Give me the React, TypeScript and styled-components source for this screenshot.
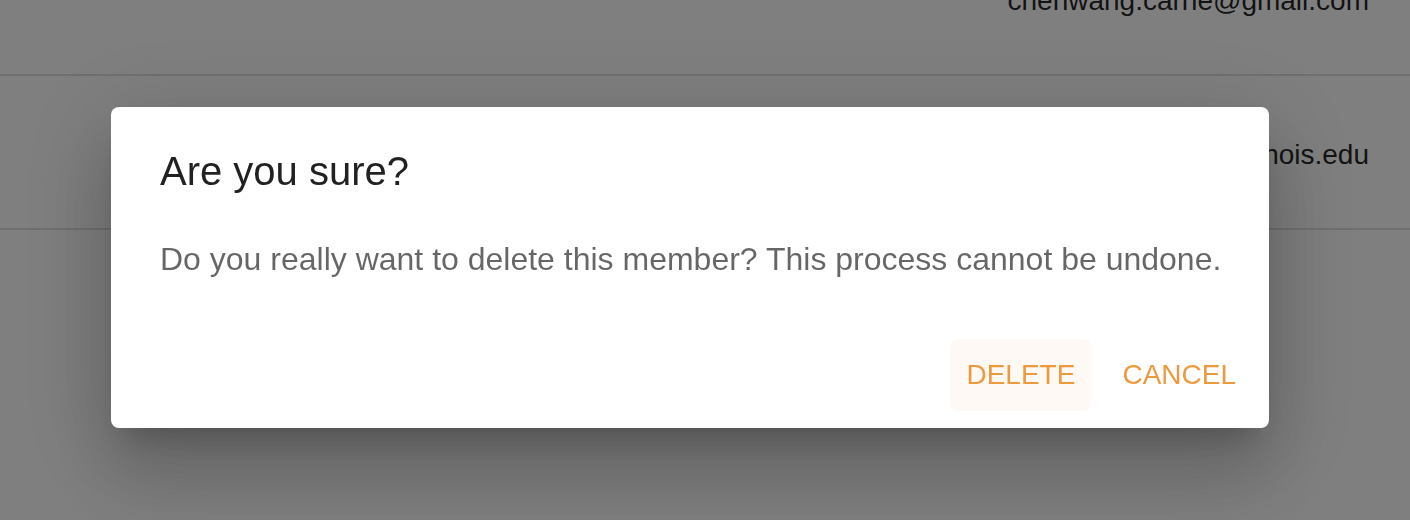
import styled, { createGlobalStyle } from "styled-components";

const GlobalStyle = createGlobalStyle`
  html, body {
    margin: 0;
    padding: 0;
    background: #ffffff;
    font-family: "Liberation Sans", Arial, Helvetica, sans-serif;
    overflow: hidden;
  }
`;

const members = [
  { email: "chenwang.carrie@gmail.com" },
  { email: "chenwang2@illinois.edu" },
];

const App = () => {
  return (
    <>
      <GlobalStyle />
      <Page>
        {/* table scrolled a bit, first row is partly hidden */}
        <MemberTable>
          {members.map((m) => (
            <MemberRow key={m.email}>
              <EmailCell>{m.email}</EmailCell>
            </MemberRow>
          ))}
        </MemberTable>
      </Page>
      <Backdrop>
        <Dialog role="dialog">
          <DialogTitle>Are you sure?</DialogTitle>
          <DialogText>Do you really want to delete this member? This process cannot be undone.</DialogText>
          <DialogActions>
            <ActionButton $hover>DELETE</ActionButton>
            <ActionButton>CANCEL</ActionButton>
          </DialogActions>
        </Dialog>
      </Backdrop>
    </>
  );
};

export default App;

const Page = styled.div`
  width: 1410px;
  height: 520px;
  overflow: hidden;
  background: #ffffff;
`;

const MemberTable = styled.div`
  display: flex;
  flex-direction: column;
  margin-top: -78px;
`;

const MemberRow = styled.div`
  display: flex;
  align-items: center;
  justify-content: flex-end;
  height: 152px;
  border-bottom: 2px solid #e0e0e0;
`;

const EmailCell = styled.div`
  padding: 5px 41px 0 0;
  font-size: 28px;
  color: rgba(0, 0, 0, 0.87);
`;

const Backdrop = styled.div`
  position: fixed;
  inset: 0;
  background: rgba(0, 0, 0, 0.5);
  display: flex;
  align-items: flex-start;
  padding: 107px 0 0 111px;
  box-sizing: border-box;
`;

const Dialog = styled.div`
  width: 1158px;
  box-sizing: border-box;
  background: #ffffff;
  border-radius: 8px;
  display: flex;
  flex-direction: column;
  padding: 40px 0 17px 49px;
  box-shadow: 0px 22px 30px -14px rgba(0, 0, 0, 0.2), 0px 48px 76px 6px rgba(0, 0, 0, 0.14),
    0px 18px 92px 16px rgba(0, 0, 0, 0.12);
`;

const DialogTitle = styled.h2`
  margin: 0;
  font-size: 40px;
  font-weight: 400;
  line-height: 48px;
  color: rgba(0, 0, 0, 0.87);
`;

const DialogText = styled.p`
  margin: 40px 0 0;
  font-size: 32px;
  line-height: 48px;
  color: rgba(0, 0, 0, 0.6);
`;

const DialogActions = styled.div`
  display: flex;
  justify-content: flex-end;
  gap: 15px;
  margin-top: 56px;
  padding-right: 17px;
`;

const ActionButton = styled.button<{ $hover?: boolean }>`
  height: 72px;
  padding: 0 16px;
  border: none;
  border-radius: 8px;
  background: ${({ $hover }) => ($hover ? "rgba(237, 153, 62, 0.06)" : "transparent")};
  color: #ed9a3e;
  font-family: "Liberation Sans", Arial, Helvetica, sans-serif;
  font-size: 28px;
  font-weight: 400;
  letter-spacing: 0;
  cursor: pointer;
`;
